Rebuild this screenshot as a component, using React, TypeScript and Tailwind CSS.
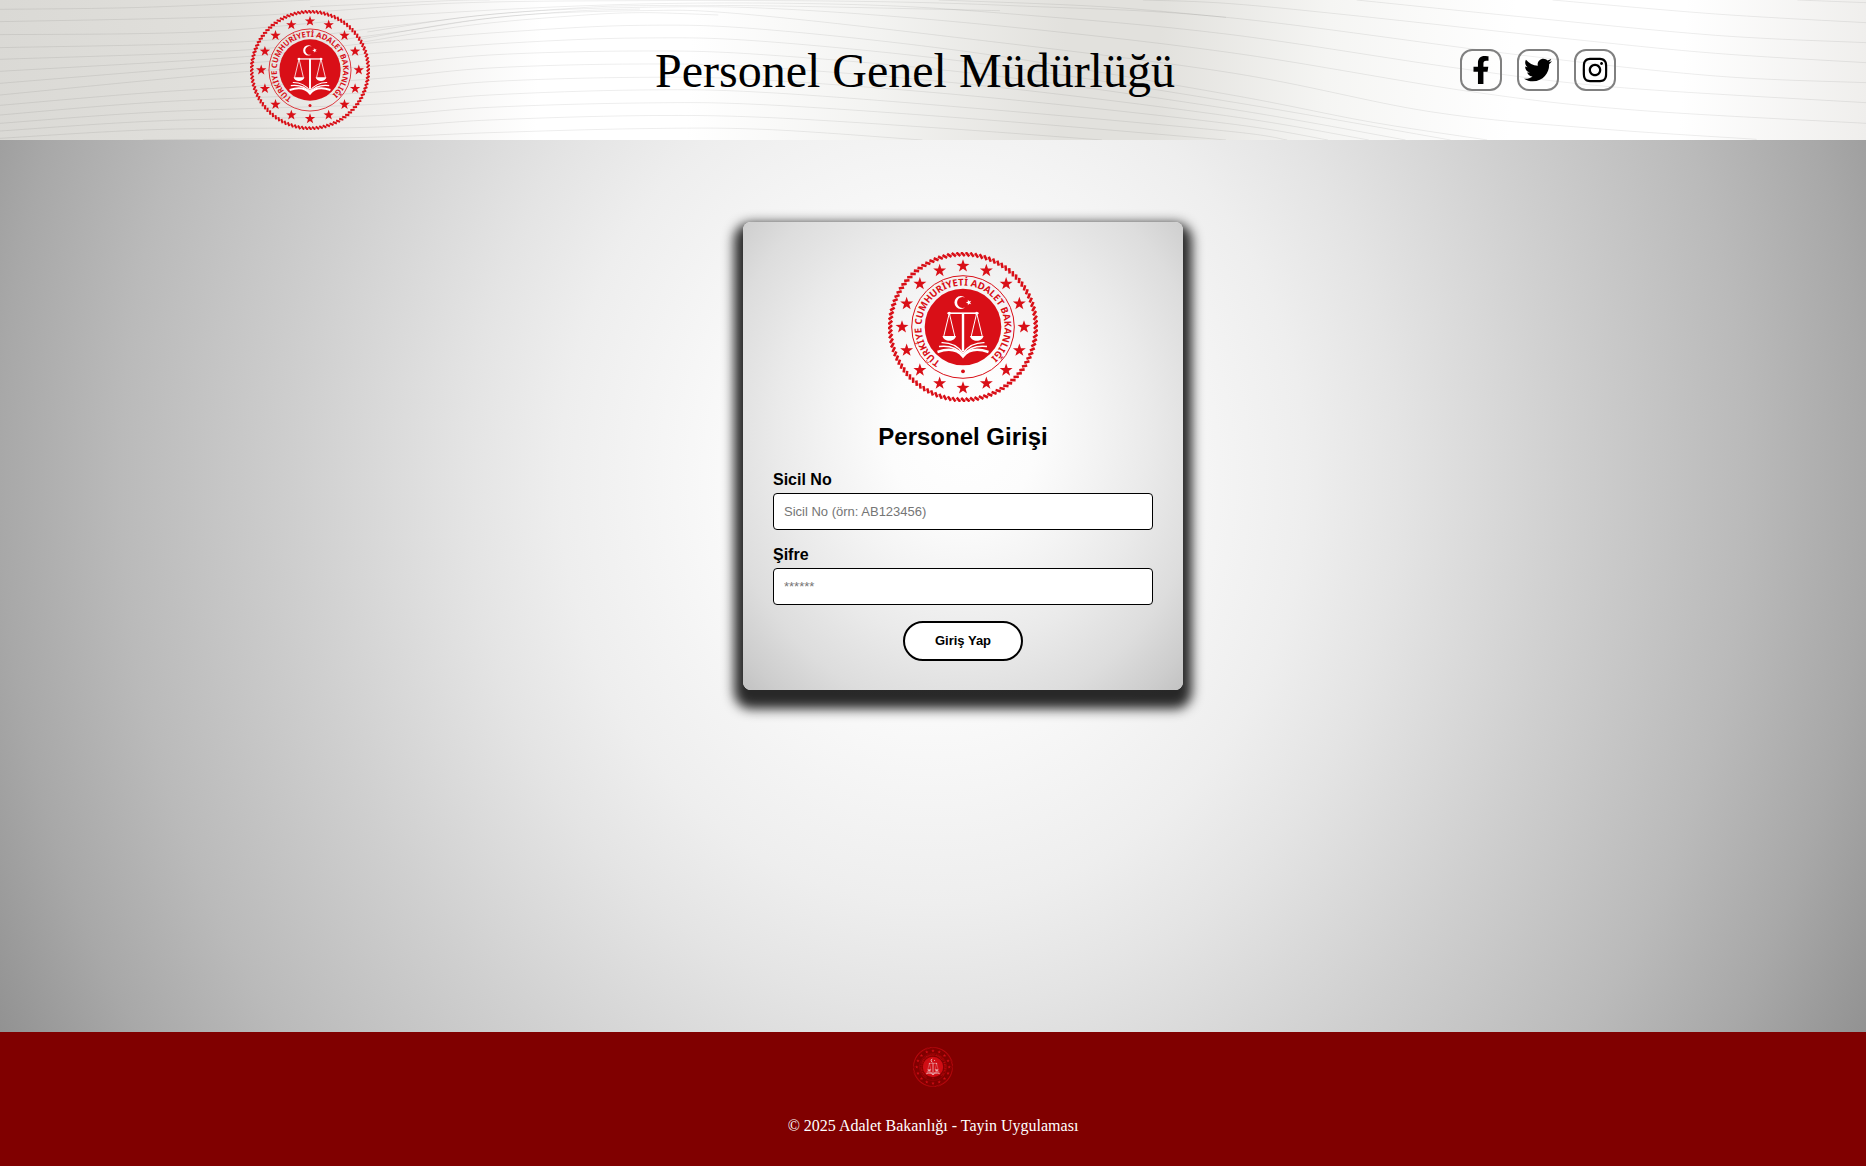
import { useId } from 'react';
import { FaFacebookF, FaInstagram, FaTwitter } from 'react-icons/fa';

type Point = [number, number];

const RED = '#d90f17';

const polar = (radius: number, degrees: number): Point => {
  const a = ((degrees - 90) * Math.PI) / 180;
  return [radius * Math.cos(a), radius * Math.sin(a)];
};

const starPoints = (cx: number, cy: number, r: number, rotation: number) =>
  Array.from({ length: 10 }, (_, i) => {
    const [x, y] = polar(i % 2 ? r * 0.4 : r, rotation + i * 36);
    return `${(cx + x).toFixed(2)},${(cy + y).toFixed(2)}`;
  }).join(' ');

const ROPE = Array.from({ length: 100 }, (_, i) => {
  const a = i * 3.6;
  const [x1, y1] = polar(74.8, a - 1.5);
  const [x2, y2] = polar(71, a + 1.5);
  return `M${x1.toFixed(2)} ${y1.toFixed(2)}L${x2.toFixed(2)} ${y2.toFixed(2)}`;
}).join('');

const STARS = Array.from({ length: 16 }, (_, i) => {
  const [x, y] = polar(61, i * 22.5);
  return starPoints(x, y, 6.8, 0);
});

function Emblem({ className }: { className: string }) {
  const id = useId();
  const [sx, sy] = polar(41.5, 213);
  const [ex, ey] = polar(41.5, 146);
  return (
    <svg viewBox="-75 -75 150 150" className={className} role="img" aria-label="Adalet Bakanlığı">
      <path d={ROPE} stroke={RED} strokeWidth="2.6" fill="none" />
      {STARS.map((points) => (
        <polygon key={points} points={points} fill={RED} />
      ))}
      <circle r="51.3" fill="none" stroke={RED} strokeWidth="1" />
      <circle r="38.3" fill={RED} />
      <circle cy="44.3" r="1.9" fill={RED} />
      <path id={id} d={`M${sx} ${sy}A41.5 41.5 0 1 1 ${ex} ${ey}`} fill="none" />
      <text fill={RED} fontSize="9.6" fontWeight="700" fontFamily='"Noto Sans", sans-serif'>
        <textPath href={`#${id}`}>TÜRKİYE CUMHURİYETİ ADALET BAKANLIĞI</textPath>
      </text>
      <path d="M2.200-29.200A6.400 6.400 0 1 0 2.200-19.800A5.400 5.400 0 1 1 2.200-29.200Z" fill="#fff" />
      <polygon points={starPoints(5.8, -24.5, 3, -90)} fill="#fff" />
      <g stroke="#fff" fill="none">
        <path d="M-15.5-13.8H15.500" strokeWidth="1.6" />
        <path d="M0-14V24" strokeWidth="2.4" />
        <path d="M-13.700-13.800L-19.300 9.500M-13.700-13.800L-8.200 9.500M13.700-13.800L8.200 9.500M13.700-13.800L19.300 9.500" strokeWidth="1" />
        <path d="M-21.500 15.600C-14 15.400-6 18 0 26C6 18 14 15.400 21.500 15.600" strokeWidth="1.400" />
        <path d="M-24 19.500C-14 18.200-6 20.500 0 28C6 20.500 14 18.200 24 19.500" strokeWidth="1.500" />
        <path d="M-25.500 25C-14 21-5 23 0 29.500C5 23 14 21 25.500 25" strokeWidth="2.400" />
      </g>
      <g fill="#fff">
        <circle cx="-13.7" cy="-13.8" r="1.5" />
        <circle cx="13.7" cy="-13.8" r="1.5" />
        <path d="M-20.500 9H-7C-7.500 12-10.500 13.800-13.700 13.800C-17 13.800-20 12-20.500 9Z" />
        <path d="M20.500 9H7C7.500 12 10.500 13.800 13.700 13.800C17 13.800 20 12 20.500 9Z" />
      </g>
    </svg>
  );
}

const WAVES: Point[][] = [
  [[0, 28], [350, 22], [760, 0]],
  [[0, 65], [600, 48], [1100, 10], [1568, 2], [2100, 4], [2500, 18], [3004, 52], [3724, 165], [4204, 228], [4572, 248]],
  [[0, 104], [500, 95], [1000, 45], [1568, 12], [2100, 14], [2500, 44], [3004, 102], [3574, 205], [3964, 262], [4572, 308]],
  [[0, 143], [600, 125], [950, 80], [1250, 38], [1568, 22], [1900, 26], [2400, 72], [3004, 156], [3604, 275], [4004, 330], [4572, 370]],
  [[0, 178], [600, 150], [950, 100], [1250, 48], [1568, 32], [1800, 40], [2300, 106], [3004, 216], [3504, 335], [3904, 385], [4304, 418]],
  [[0, 214], [600, 170], [900, 130], [1250, 95], [1568, 76], [1870, 88], [2400, 160], [3004, 282], [3354, 365], [3644, 420]],
  [[0, 250], [600, 190], [900, 162], [1250, 129], [1568, 114], [1870, 124], [2400, 190], [3004, 303], [3554, 420]],
  [[0, 285], [600, 215], [900, 200], [1200, 165], [1568, 153], [1870, 164], [2400, 222], [3004, 325], [3444, 420]],
  [[0, 316], [400, 275], [900, 238], [1200, 204], [1568, 192], [1870, 202], [2400, 256], [3004, 347], [3354, 420]],
  [[0, 345], [400, 305], [900, 278], [1200, 245], [1568, 232], [1870, 240], [2400, 290], [3004, 370], [3254, 420]],
  [[0, 370], [400, 335], [900, 314], [1200, 285], [1568, 270], [1870, 277], [2400, 326], [3004, 393], [3154, 420]],
  [[0, 393], [400, 362], [900, 348], [1200, 322], [1568, 309], [1870, 314], [2400, 358], [3004, 420]],
  [[0, 415], [400, 388], [900, 382], [1200, 360], [1568, 347], [1870, 352], [2300, 384], [2700, 420]],
  [[350, 420], [900, 412], [1200, 398], [1568, 386], [1870, 388], [2260, 420]],
  [[760, 20], [1100, 2], [1200, 0]],
  [[880, 128], [1150, 76], [1400, 48], [1568, 38], [1760, 45]],
  [[880, 118], [1150, 62], [1400, 34], [1568, 27]],
  [[900, 96], [1150, 50], [1400, 25], [1568, 17], [1900, 18], [2450, 32]],
  [[2300, 0], [2700, 20], [3004, 52]],
  [[2800, 0], [3004, 10], [3304, 45], [3854, 118], [4204, 160], [4572, 188]],
  [[3324, 0], [3724, 50], [4204, 106], [4572, 128]],
  [[3804, 0], [4204, 42], [4572, 68]],
  [[4404, 0], [4572, 8]],
];

const smooth = (pts: Point[]) =>
  pts.slice(1).reduce((d, p, i) => {
    const before = pts[i - 1] ?? pts[i];
    const from = pts[i];
    const after = pts[i + 2] ?? p;
    const c = [
      from[0] + (p[0] - before[0]) / 6,
      from[1] + (p[1] - before[1]) / 6,
      p[0] - (after[0] - from[0]) / 6,
      p[1] - (after[1] - from[1]) / 6,
    ].map((n) => n.toFixed(1));
    return `${d}C${c.join(' ')} ${p.join(' ')}`;
  }, `M${pts[0].join(' ')}`);

const WAVE_PATH = WAVES.map(smooth).join('');

const SOCIAL = [
  { label: 'Facebook', Icon: FaFacebookF },
  { label: 'Twitter', Icon: FaTwitter },
  { label: 'Instagram', Icon: FaInstagram },
];

function Header() {
  return (
    <header className="relative bg-[linear-gradient(93deg,#dad9d5_0%,#e1e0dc_12%,#f0efed_21%,#ffffff_29%,#ffffff_37%,#f3f3f1_47%,#e2e1dd_57%,#e2e1dd_62%,#f5f5f3_71%,#ffffff_81%,#ffffff_90%,#efeeec_100%)]">
      <svg className="absolute inset-0 h-full w-full" viewBox="0 0 4572 420" preserveAspectRatio="none" aria-hidden="true">
        <path d={WAVE_PATH} fill="none" stroke="#000" strokeOpacity="0.07" strokeWidth="1" vectorEffect="non-scaling-stroke" />
      </svg>
      <div className="relative flex items-center justify-between px-[250px] py-2.5">
        <Emblem className="size-[120px]" />
        <h1 className="pt-0.5 font-['Liberation_Serif',serif] text-[48px] leading-[56px] text-black">Personel Genel Müdürlüğü</h1>
        <nav className="flex gap-[15px]" aria-label="Sosyal medya">
          {SOCIAL.map(({ label, Icon }) => (
            <a key={label} href="#" aria-label={label} className="flex size-[42px] items-center justify-center rounded-xl border-2 border-[#808080] text-black">
              <Icon size={28} />
            </a>
          ))}
        </nav>
      </div>
    </header>
  );
}

function Field({ id, label, type, placeholder }: { id: string; label: string; type: string; placeholder: string }) {
  return (
    <div className="mb-4 flex flex-col">
      <label htmlFor={id} className="mb-1 text-base leading-[18px] font-bold">
        {label}
      </label>
      <input
        id={id}
        type={type}
        placeholder={placeholder}
        className="h-[37px] w-full rounded border border-black bg-white px-2.5 text-[13px] placeholder:text-[#757575]"
      />
    </div>
  );
}

function LoginCard() {
  return (
    <form
      onSubmit={(e) => e.preventDefault()}
      className="flex w-[440px] flex-col rounded-lg bg-[radial-gradient(ellipse_85%_91%_at_50%_45%,#ffffff_0%,#fcfcfc_20%,#f3f3f3_36%,#eaeaea_50%,#dddddd_66%,#cdcdcd_78%,#bcbcbc_88%,#b0b0b0_100%)] p-[30px] pb-[29px] font-['Liberation_Sans',sans-serif] text-black shadow-[0_10px_12px_9px_rgba(0,0,0,0.84)]"
    >
      <Emblem className="size-[150px] self-center" />
      <h2 className="mt-[21px] mb-5 text-center text-2xl leading-7 font-bold">Personel Girişi</h2>
      <Field id="sicil" label="Sicil No" type="text" placeholder="Sicil No (örn: AB123456)" />
      <Field id="sifre" label="Şifre" type="password" placeholder="******" />
      <button type="submit" className="h-10 w-[120px] self-center rounded-[20px] border-2 border-black bg-white text-[13px] font-bold">
        Giriş Yap
      </button>
    </form>
  );
}

export default function App() {
  return (
    <div className="flex min-h-screen flex-col">
      <Header />
      <main className="flex grow items-start justify-center bg-[radial-gradient(ellipse_50%_119%_at_50%_38%,#ffffff_0%,#f9f9f9_23%,#eeeeee_40%,#e4e4e4_50%,#cfcfcf_68%,#bababa_87%,#a8a8a8_100%,#8e8e8e_115%)] pt-[82px] pl-[60px]">
        <LoginCard />
      </main>
      <footer className="flex flex-col items-center bg-[#800000] pt-[15px] pb-[31px] font-['Liberation_Serif',serif] text-white">
        <Emblem className="size-10 opacity-90" />
        <p className="mt-[30px] text-base leading-[18px]">© 2025 Adalet Bakanlığı - Tayin Uygulaması</p>
      </footer>
    </div>
  );
}
